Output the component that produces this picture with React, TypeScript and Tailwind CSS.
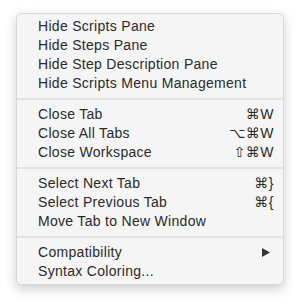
import React from 'react';

type Item = { label: string; shortcut?: string; submenu?: boolean };

const groups: Item[][] = [
  [
    { label: 'Hide Scripts Pane' },
    { label: 'Hide Steps Pane' },
    { label: 'Hide Step Description Pane' },
    { label: 'Hide Scripts Menu Management' },
  ],
  [
    { label: 'Close Tab', shortcut: '⌘W' },
    { label: 'Close All Tabs', shortcut: '⌥⌘W' },
    { label: 'Close Workspace', shortcut: '⇧⌘W' },
  ],
  [
    { label: 'Select Next Tab', shortcut: '⌘}' },
    { label: 'Select Previous Tab', shortcut: '⌘{' },
    { label: 'Move Tab to New Window' },
  ],
  [{ label: 'Compatibility', submenu: true }, { label: 'Syntax Coloring...' }],
];

function MenuRow({ item }: { item: Item }) {
  return (
    <div className="flex h-[19px] items-center justify-between pl-[21px] pr-[9px] leading-[19px]">
      <span className="tracking-[0.3px]">{item.label}</span>
      {item.shortcut && <span className="tracking-[0.5px]">{item.shortcut}</span>}
      {item.submenu && (
        <svg width="8" height="9" viewBox="0 0 8 9" className="mr-[4px]">
          <path d="M0 0 L8 4.5 L0 9 Z" fill="#333333" />
        </svg>
      )}
    </div>
  );
}

export default function App() {
  return (
    <div className="h-[306px] w-full bg-white pl-[16px] pt-[13px]">
      <div
        className="w-[268px] rounded-[5px] border border-[#d8d8d8] bg-[#f5f5f5] py-[3px] text-[14px] text-[#2a2a2a] shadow-[0_4px_12px_rgba(0,0,0,0.2)]"
        style={{ fontFamily: '"Liberation Sans", "DejaVu Sans", Arial, sans-serif' }}
      >
        {groups.map((group, gi) => (
          <div key={gi}>
            {gi > 0 && (
              <div className="flex h-[12px] items-center">
                <div className="h-[2px] w-full bg-[#e2e2e2]" />
              </div>
            )}
            {group.map((item) => (
              <MenuRow key={item.label} item={item} />
            ))}
          </div>
        ))}
      </div>
    </div>
  );
}
